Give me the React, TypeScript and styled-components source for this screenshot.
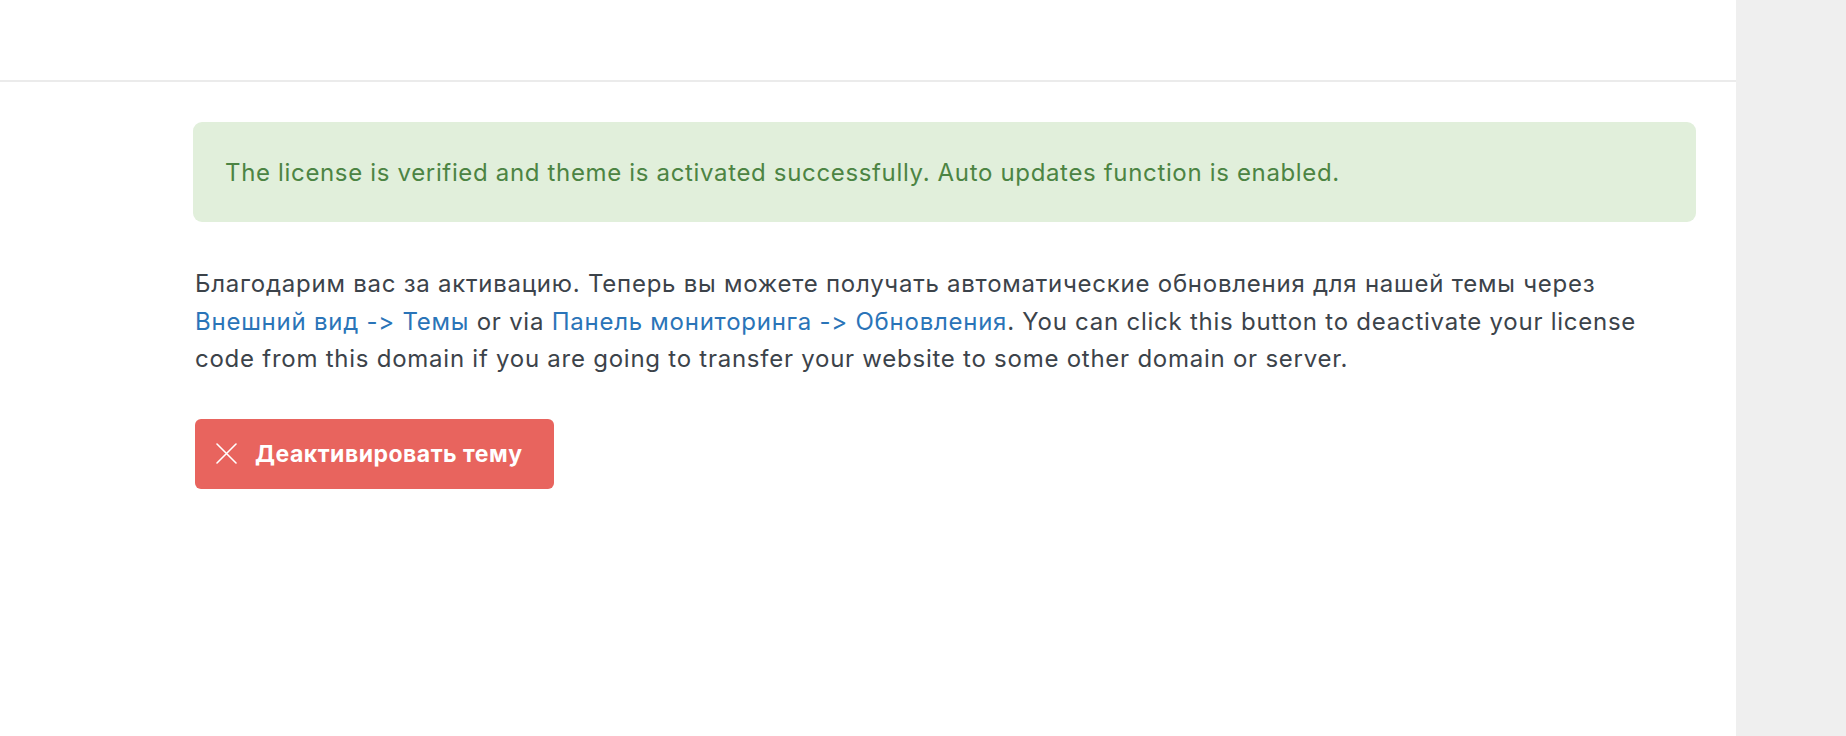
import styled, { createGlobalStyle } from "styled-components";

const GlobalStyle = createGlobalStyle`
  html, body {
    margin: 0;
    padding: 0;
    background: #ffffff;
  }
  body {
    font-family: Inter, "Noto Sans", "Liberation Sans", sans-serif;
    font-variant-ligatures: none;
    font-feature-settings: "calt" 0, "liga" 0;
  }
`;

const Page = styled.div`
  display: flex;
  width: 1846px;
  height: 736px;
  overflow: hidden;
`;

const Main = styled.div`
  flex: 1;
  display: flex;
  flex-direction: column;
  background: #ffffff;
`;

const Sidebar = styled.aside`
  width: 110px;
  flex-shrink: 0;
  background: #efefef;
`;

const TopBar = styled.header`
  height: 80px;
  border-bottom: 2px solid #ebebeb;
`;

const Content = styled.section`
  padding: 40px 40px 0 193px;
`;

const Notice = styled.div`
  box-sizing: border-box;
  height: 100px;
  padding: 0 32px;
  display: flex;
  align-items: center;
  background: #e1efdb;
  border-radius: 9px;
  color: #4c8443;
  font-size: 24px;
  letter-spacing: 0.66px;
`;

const Text = styled.p`
  margin: 43px 0 0 2px;
  font-size: 24px;
  letter-spacing: 0.75px;
  line-height: 37.6px;
  color: #3c434a;
`;

const Link = styled.a`
  color: #2a74b8;
  text-decoration: none;
`;

const DeactivateButton = styled.button`
  margin: 41px 0 0 2px;
  height: 70px;
  padding: 0 31px 0 21px;
  display: inline-flex;
  align-items: center;
  gap: 18px;
  border: none;
  border-radius: 6px;
  background: #e8645e;
  color: #ffffff;
  font-family: inherit;
  font-size: 23px;
  font-weight: 700;
  letter-spacing: 0.5px;
  cursor: pointer;
`;

const CloseIcon = () => (
  <svg width="21" height="21" viewBox="0 0 21 21" fill="none">
    <path d="M1 1L20 20M20 1L1 20" stroke="#ffffff" strokeWidth="1.6" strokeLinecap="round" />
  </svg>
);

export default function App() {
  return (
    <>
      <GlobalStyle />
      <Page>
        <Main>
          <TopBar />
          <Content>
            <Notice>
              The license is verified and theme is activated successfully. Auto updates function is enabled.
            </Notice>
            <Text>
              Благодарим вас за активацию. Теперь вы можете получать автоматические обновления для нашей темы через
              <br />
              <Link href="#">Внешний вид -&gt; Темы</Link> or via{" "}
              <Link href="#">Панель мониторинга -&gt; Обновления</Link>. You can click this button to deactivate your
              license code from this domain if you are going to transfer your website to some other domain or server.
            </Text>
            <DeactivateButton>
              <CloseIcon />
              Деактивировать тему
            </DeactivateButton>
          </Content>
        </Main>
        <Sidebar />
      </Page>
    </>
  );
}
